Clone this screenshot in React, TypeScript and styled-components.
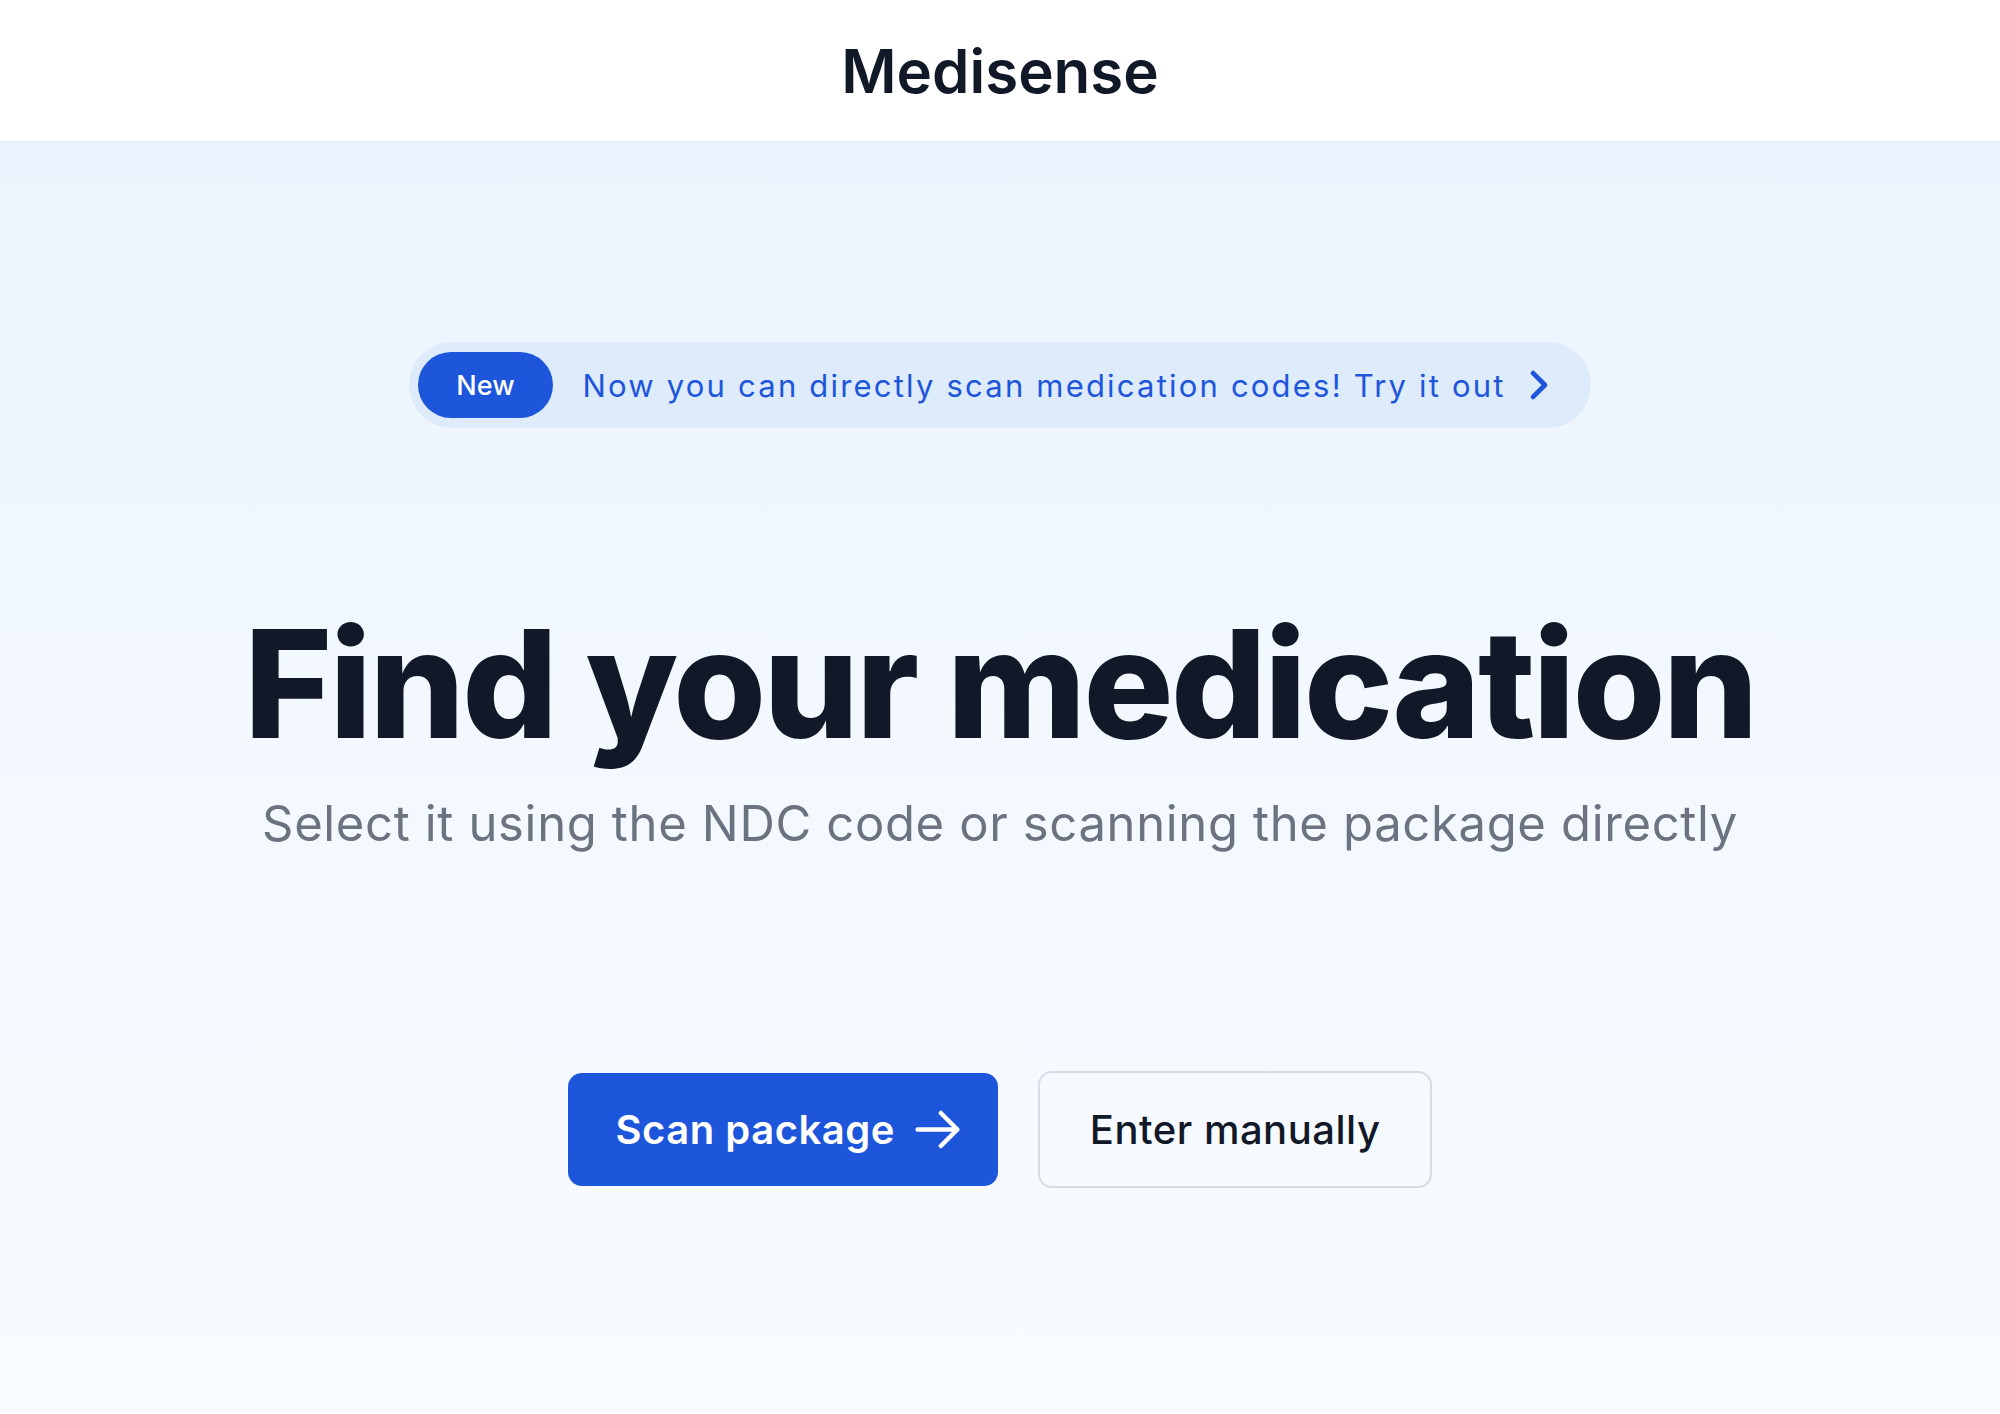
import React from 'react';
import styled, { createGlobalStyle } from 'styled-components';

const GlobalStyle = createGlobalStyle`
  * { box-sizing: border-box; }
  html, body { margin: 0; padding: 0; }
  body {
    font-family: 'Inter', 'Noto Sans', sans-serif;
    color: #111827;
    background: #ffffff;
  }
`;

const Page = styled.div`
  display: flex;
  flex-direction: column;
  min-height: 100vh;
`;

const Header = styled.header`
  height: 142px;
  display: flex;
  align-items: center;
  justify-content: center;
  background: #ffffff;
  border-bottom: 1px solid #e3e8ef;
`;

const Brand = styled.h1`
  margin: 0;
  font-size: 60px;
  font-weight: 600;
  color: #111827;
`;

const Hero = styled.main`
  flex: 1;
  display: flex;
  flex-direction: column;
  align-items: center;
  padding-top: 200px;
  background: linear-gradient(180deg, #ebf4fe 0%, #f3f8ff 45%, #f8fbff 100%);
`;

const Announcement = styled.a`
  display: flex;
  align-items: center;
  gap: 30px;
  height: 86px;
  padding: 0 33px 0 9px;
  border-radius: 999px;
  background: #deebfb;
  color: #1d55db;
  text-decoration: none;
  font-size: 31px;
  cursor: pointer;
`;

const Badge = styled.span`
  display: flex;
  align-items: center;
  height: 66px;
  padding: 0 38px;
  border-radius: 999px;
  background: #1d55db;
  color: #ffffff;
  font-size: 27px;
  font-weight: 500;
`;

const AnnouncementText = styled.span`
  display: flex;
  align-items: center;
  gap: 14px;
  letter-spacing: 2.2px;
`;

const Title = styled.h2`
  margin: 173px 0 0;
  font-size: 150px;
  font-weight: 800;
  line-height: 1.1;
  letter-spacing: -0.017em;
  color: #111827;
`;

const Subtitle = styled.p`
  margin: 28px 0 0;
  font-size: 49px;
  font-weight: 400;
  letter-spacing: 0.65px;
  color: #6b7280;
`;

const Actions = styled.div`
  display: flex;
  align-items: center;
  gap: 40px;
  margin-top: 218px;
`;

const Button = styled.button<{ $primary?: boolean }>`
  display: flex;
  align-items: center;
  justify-content: center;
  gap: 16px;
  height: ${(p) => (p.$primary ? '113px' : '117px')};
  padding: ${(p) => (p.$primary ? '0 34px 0 48px' : '0 50px')};
  border-radius: 14px;
  border: ${(p) => (p.$primary ? 'none' : '2px solid #d5dce6')};
  background: ${(p) => (p.$primary ? '#1d55db' : 'transparent')};
  color: ${(p) => (p.$primary ? '#ffffff' : '#111827')};
  font-family: inherit;
  font-size: 40px;
  letter-spacing: 0.5px;
  font-weight: ${(p) => (p.$primary ? 600 : 500)};
  cursor: pointer;
`;

const ChevronIcon = () => (
  <svg width="38" height="38" viewBox="0 0 24 24" fill="none" stroke="currentColor" strokeWidth="3" strokeLinecap="round" strokeLinejoin="round">
    <path d="m8.25 4.5 7.5 7.5-7.5 7.5" />
  </svg>
);

const ArrowIcon = () => (
  <svg width="53" height="53" viewBox="0 0 24 24" fill="none" stroke="currentColor" strokeWidth="2" strokeLinecap="round" strokeLinejoin="round">
    <path d="M13.5 4.5 21 12m0 0-7.5 7.5M21 12H3" />
  </svg>
);

export default function App() {
  return (
    <Page>
      <GlobalStyle />
      <Header>
        <Brand>Medisense</Brand>
      </Header>
      <Hero>
        <Announcement>
          <Badge>New</Badge>
          <AnnouncementText>
            Now you can directly scan medication codes! Try it out
            <ChevronIcon />
          </AnnouncementText>
        </Announcement>
        <Title>Find your medication</Title>
        <Subtitle>Select it using the NDC code or scanning the package directly</Subtitle>
        <Actions>
          <Button $primary>
            Scan package
            <ArrowIcon />
          </Button>
          <Button>Enter manually</Button>
        </Actions>
      </Hero>
    </Page>
  );
}
